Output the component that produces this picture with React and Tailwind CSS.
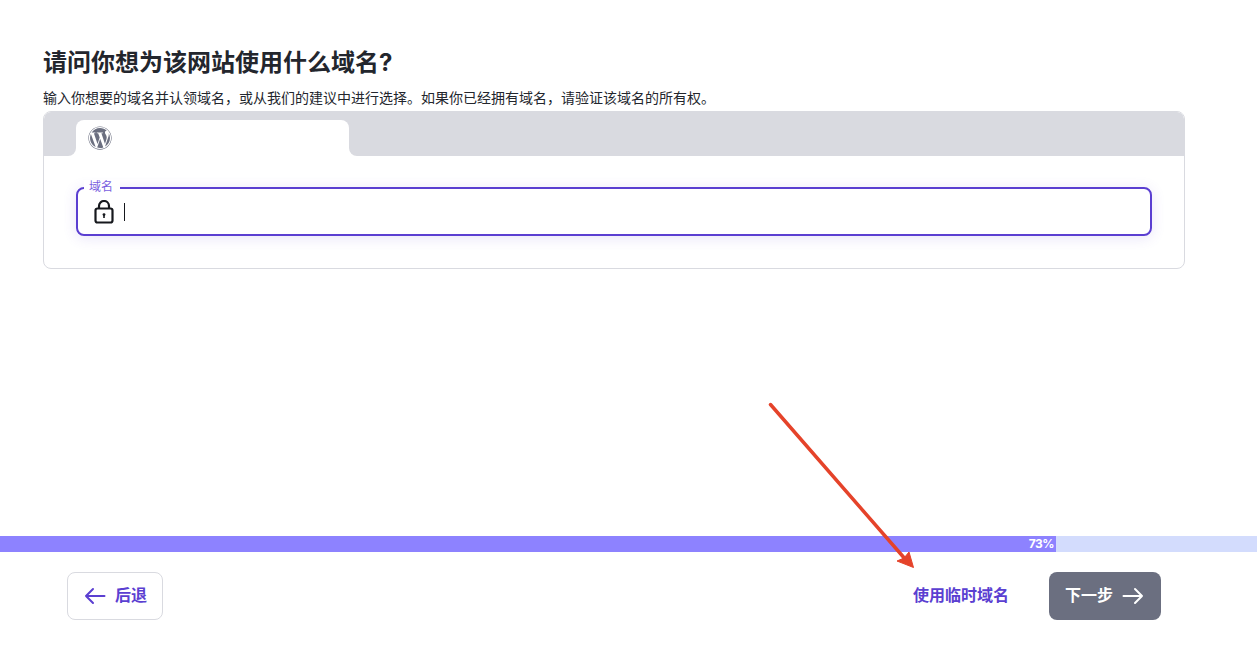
import React from "react";
import { FaWordpress } from "react-icons/fa";

const fontStack = "font-['Inter','Noto_Sans_CJK_SC',sans-serif]";

const LockIcon = () => (
  <svg width="20" height="24" viewBox="0 0 20 24" fill="none" stroke="#16181d" strokeWidth="2.2">
    <path d="M5 9V6a5 5 0 0 1 10 0V9" />
    <rect x="1.5" y="8.5" width="17" height="14" rx="2" />
    <circle cx="10" cy="14.6" r="1.4" fill="#16181d" stroke="none" />
    <rect x="9.2" y="15" width="1.6" height="3" fill="#16181d" stroke="none" />
  </svg>
);

const ArrowLeft = () => (
  <svg width="24" height="24" viewBox="0 0 24 24" fill="none" stroke="#5b3fd1" strokeWidth="2" strokeLinecap="round" strokeLinejoin="round">
    <path d="M21.5 12H3M10 5l-7 7 7 7" />
  </svg>
);

const ArrowRight = () => (
  <svg width="24" height="24" viewBox="0 0 24 24" fill="none" stroke="#ffffff" strokeWidth="2" strokeLinecap="round" strokeLinejoin="round">
    <path d="M2.5 12H21M14 5l7 7-7 7" />
  </svg>
);

const DomainCard = () => (
  <div className="w-[1142px] h-[158px] rounded-lg border border-[#d9dae0] overflow-hidden bg-white">
    <div className="flex h-[44px] bg-white">
      <div className="w-[32px] bg-[#d9dae0] rounded-br-lg" />
      <div className="w-[273px] bg-[#d9dae0] pt-[8px]">
        <div className="h-[36px] bg-white rounded-t-lg pl-[12px] pt-[6px]">
          <FaWordpress size={24} color="#6b6f80" />
        </div>
      </div>
      <div className="flex-1 bg-[#d9dae0] rounded-bl-lg" />
    </div>
    <div className="relative ml-[32px] mt-[31px] w-[1076px] h-[49px] rounded-lg border-2 border-[#5b3fd1] bg-white shadow-[0_2px_14px_rgba(91,63,209,0.14)] flex items-center pl-[16px]">
      <span className="absolute left-[6px] -top-[9px] bg-white pl-[5px] pr-[7px] text-xs leading-[14px] text-[#7a5fe0]">域名</span>
      <LockIcon />
      <span className="ml-[10px] w-px h-[18px] bg-[#16181d]" />
    </div>
  </div>
);

export default function App() {
  return (
    <div className={`relative h-[652px] flex flex-col bg-white overflow-hidden ${fontStack}`}>
      <div className="flex-1 pl-[43px] pt-[47px]">
        <h1 className="text-2xl leading-[32px] font-bold text-[#23262d]">请问你想为该网站使用什么域名?</h1>
        <p className="mt-[8px] mb-[2px] text-sm leading-[22px] text-[#23262d]">
          输入你想要的域名并认领域名，或从我们的建议中进行选择。如果你已经拥有域名，请验证该域名的所有权。
        </p>
        <DomainCard />
      </div>

      <div className="h-[16px] bg-[#d3dcfd]">
        <div className="w-[1056px] h-full bg-[#8d82ff] flex items-center justify-end pr-[2px] text-xs tracking-[-0.5px] font-bold text-white">73%</div>
      </div>

      <div className="h-[100px] pt-[20px] pl-[67px] pr-[96px] flex items-start justify-between">
        <button className="h-[48px] w-[96px] rounded-lg border border-[#d9dae0] bg-white flex items-center justify-center gap-[8px] text-base font-semibold text-[#5b3fd1]">
          <ArrowLeft />
          <span className="mb-[2px]">后退</span>
        </button>
        <div className="flex items-center gap-[40px]">
          <button className="pb-[2px] text-base font-semibold text-[#5b3fd1]">使用临时域名</button>
          <button className="h-[48px] w-[112px] rounded-lg bg-[#6b6f80] flex items-center justify-center gap-[8px] text-base font-semibold text-white">
            <span className="mb-[2px]">下一步</span>
            <ArrowRight />
          </button>
        </div>
      </div>

      {/* red annotation arrow drawn over the page */}
      <svg className="absolute left-[760px] top-[395px]" width="170" height="185" viewBox="0 0 170 185" fill="none">
        <path d="M10.5 9.5L146 165" stroke="#e5432a" strokeWidth="3.5" strokeLinecap="round" />
        <path d="M153.5 172.5L137 166L144 163L149 157Z" fill="#e5432a" stroke="#e5432a" strokeWidth="1" />
      </svg>
    </div>
  );
}
